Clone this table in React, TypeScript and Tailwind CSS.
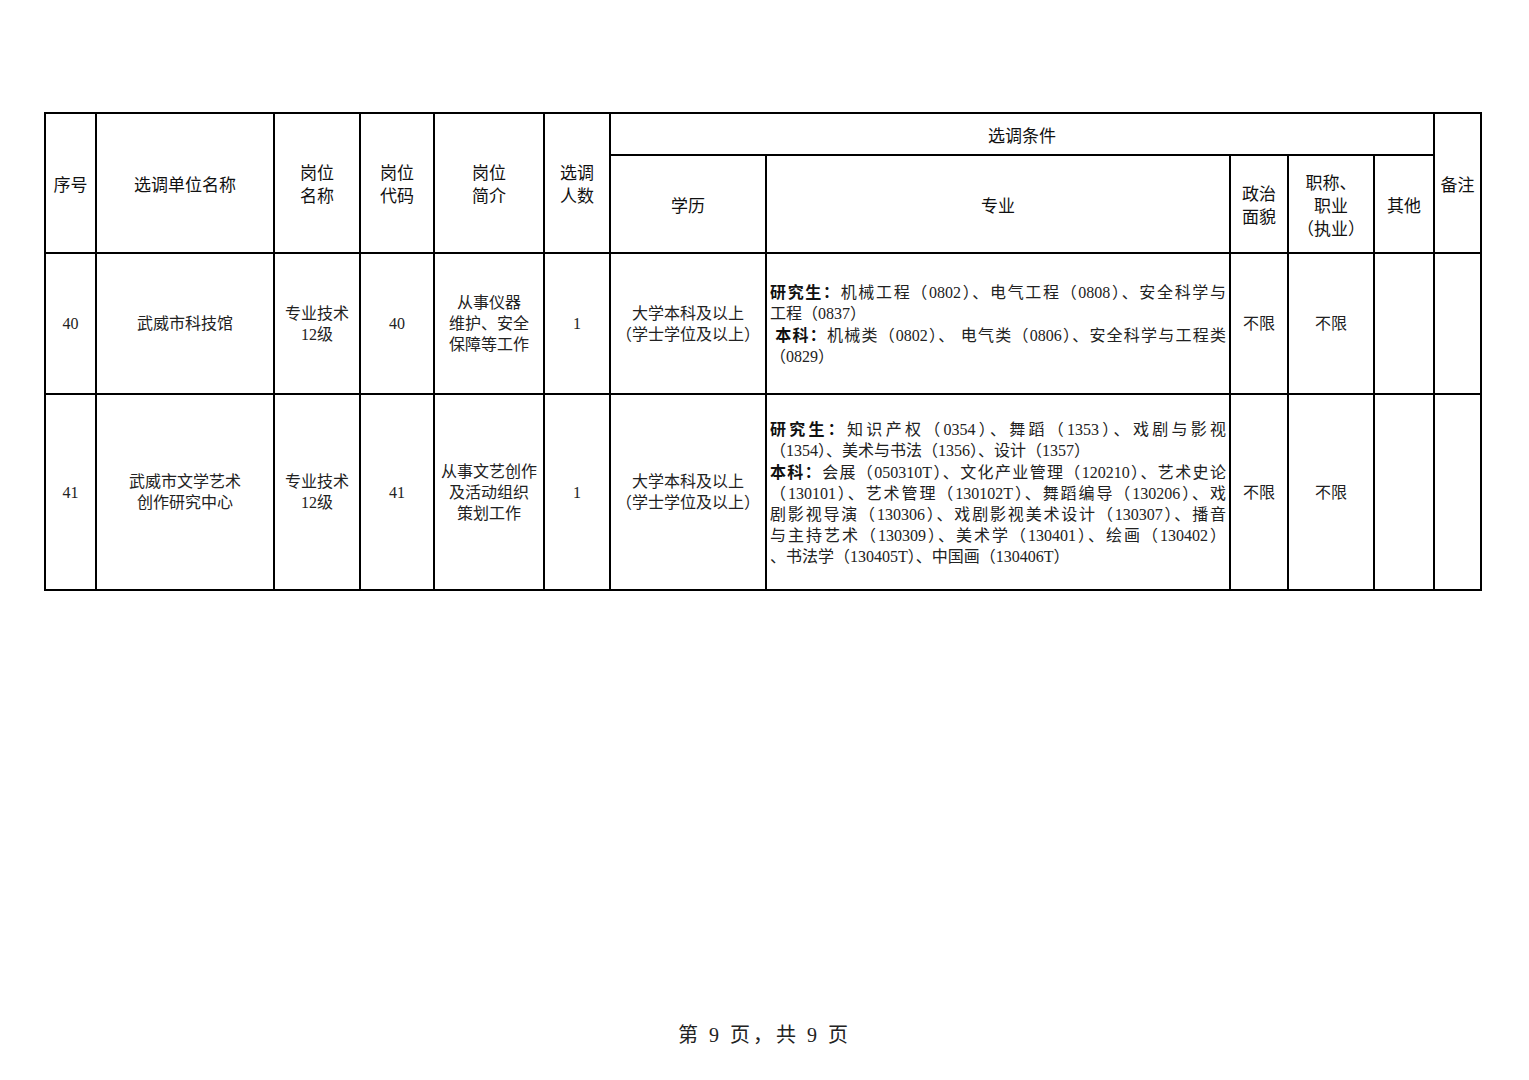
const sans = "font-['Noto_Sans_CJK_SC','Noto_Sans',sans-serif]";
const serif = "font-['Liberation_Serif','Noto_Sans_CJK_SC',serif]";

const cols = [51, 178, 86, 74, 110, 66, 156, 464, 58, 86, 60, 47];

const th = `border-2 border-black text-center align-middle text-[17px] leading-[23px] text-[#111] font-normal ${sans}`;
const td = `border-2 border-black text-center align-middle text-[16px] leading-[21px] text-[#222] ${serif}`;

function Lines({ lines }: { lines: { text: React.ReactNode; full?: boolean }[] }) {
  return (
    <div className="px-[3px] text-left">
      {lines.map((l, i) => (
        <div
          key={i}
          className={l.full ? "text-justify [text-align-last:justify] whitespace-nowrap" : "whitespace-nowrap"}
        >
          {l.text}
        </div>
      ))}
    </div>
  );
}

const B = ({ children }: { children: React.ReactNode }) => (
  <span className={`font-bold text-[#111] ${sans}`}>{children}</span>
);

export default function App() {
  return (
    <div className="w-[1529px] h-[1080px] bg-white relative">
      <div className="pt-[112px] pl-[44px]">
        <table className="table-fixed border-collapse w-[1438px]">
          <colgroup>
            {cols.map((w, i) => (
              <col key={i} style={{ width: w }} />
            ))}
          </colgroup>
          <thead>
            <tr className="h-[42px]">
              <th rowSpan={2} className={th}>序号</th>
              <th rowSpan={2} className={th}>选调单位名称</th>
              <th rowSpan={2} className={th}>岗位<br />名称</th>
              <th rowSpan={2} className={th}>岗位<br />代码</th>
              <th rowSpan={2} className={th}>岗位<br />简介</th>
              <th rowSpan={2} className={th}>选调<br />人数</th>
              <th colSpan={5} className={th}>选调条件</th>
              <th rowSpan={2} className={th}>备注</th>
            </tr>
            <tr className="h-[98px]">
              <th className={th}>学历</th>
              <th className={th}>专业</th>
              <th className={th}>政治<br />面貌</th>
              <th className={th}>职称、<br />职业<br />（执业）</th>
              <th className={th}>其他</th>
            </tr>
          </thead>
          <tbody>
            <tr className="h-[141px]">
              <td className={td}>40</td>
              <td className={td}>武威市科技馆</td>
              <td className={td}>专业技术<br />12级</td>
              <td className={td}>40</td>
              <td className={td}>从事仪器<br />维护、安全<br />保障等工作</td>
              <td className={td}>1</td>
              <td className={td}>大学本科及以上<br />（学士学位及以上）</td>
              <td className={td}>
                <Lines
                  lines={[
                    { text: <><B>研究生：</B>机械工程（0802）、电气工程（0808）、安全科学与</>, full: true },
                    { text: "工程（0837）" },
                    { text: <>&nbsp;<B>本科：</B>机械类（0802）、 电气类（0806）、安全科学与工程类</>, full: true },
                    { text: "（0829）" },
                  ]}
                />
              </td>
              <td className={td}>不限</td>
              <td className={td}>不限</td>
              <td className={td}></td>
              <td className={td}></td>
            </tr>
            <tr className="h-[196px]">
              <td className={td}>41</td>
              <td className={td}>武威市文学艺术<br />创作研究中心</td>
              <td className={td}>专业技术<br />12级</td>
              <td className={td}>41</td>
              <td className={td}>从事文艺创作<br />及活动组织<br />策划工作</td>
              <td className={td}>1</td>
              <td className={td}>大学本科及以上<br />（学士学位及以上）</td>
              <td className={`${td} leading-[21.5px]`}>
                <Lines
                  lines={[
                    { text: <><B>研究生：</B>知识产权（0354）、舞蹈（1353）、戏剧与影视</>, full: true },
                    { text: "（1354）、美术与书法（1356）、设计（1357）" },
                    { text: <><B>本科：</B>会展（050310T）、文化产业管理（120210）、艺术史论</>, full: true },
                    { text: "（130101）、艺术管理（130102T）、舞蹈编导（130206）、戏", full: true },
                    { text: "剧影视导演（130306）、戏剧影视美术设计（130307）、播音", full: true },
                    { text: "与主持艺术（130309）、美术学（130401）、绘画（130402）", full: true },
                    { text: "、书法学（130405T）、中国画（130406T）" },
                  ]}
                />
              </td>
              <td className={td}>不限</td>
              <td className={td}>不限</td>
              <td className={td}></td>
              <td className={td}></td>
            </tr>
          </tbody>
        </table>
      </div>
      <div className={`absolute left-0 right-0 top-[1021px] text-center text-[20px] leading-[28px] tracking-[3px] text-[#222] ${serif} whitespace-pre`}>
        第 9 页，共 9 页
      </div>
    </div>
  );
}
